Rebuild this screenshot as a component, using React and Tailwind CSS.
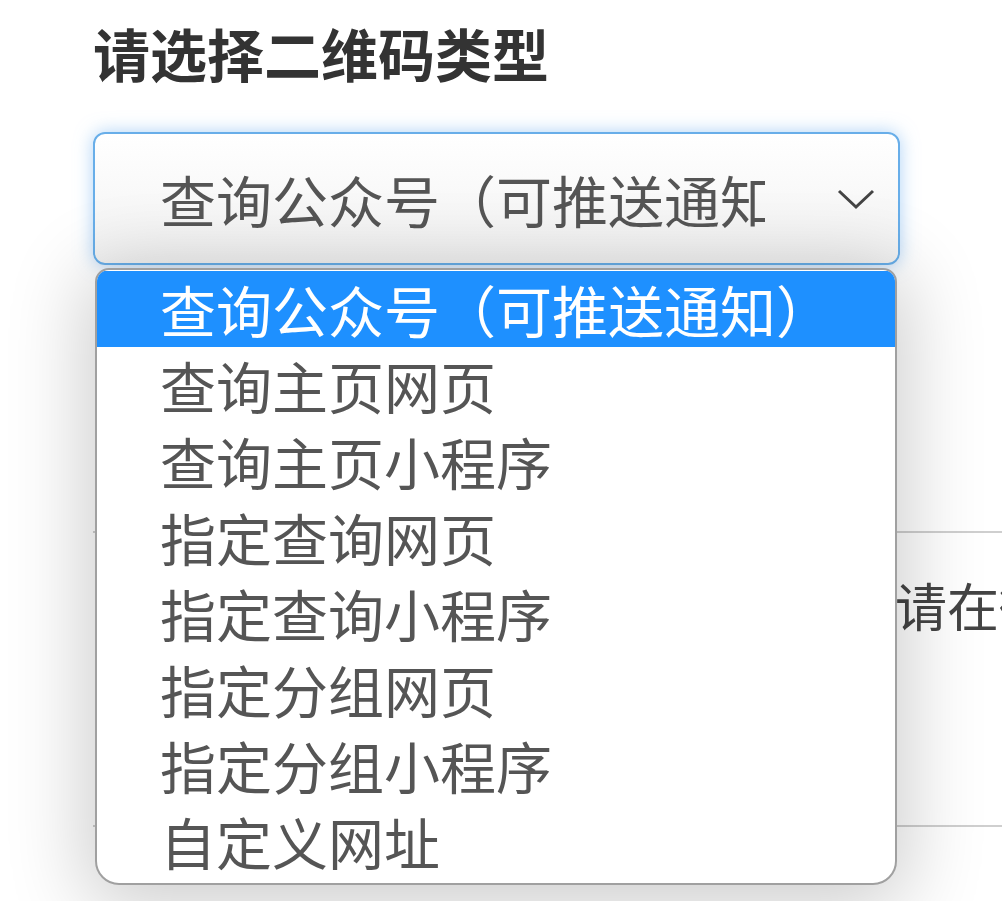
import { useState } from 'react';

const options = [
    '查询公众号（可推送通知）',
    '查询主页网页',
    '查询主页小程序',
    '指定查询网页',
    '指定查询小程序',
    '指定分组网页',
    '指定分组小程序',
    '自定义网址',
];

const cjk = "font-['Noto_Sans_CJK_SC','Noto_Sans',sans-serif]";

export default function App() {
    const [selected, setSelected] = useState(0);

    return (
        <div className={`relative h-[901px] w-full overflow-hidden bg-white ${cjk}`}>
            <div className="pl-[93px] pt-[14px]">
                <h1 className="h-[76px] text-[57px] font-bold leading-[76px] text-[#333] whitespace-nowrap">
                    请选择二维码类型
                </h1>

                {/* select box */}
                <div className="mt-[42px] flex h-[133px] w-[807px] items-center rounded-[12px] border-2 border-[#68aee9] bg-gradient-to-b from-white to-[#f2f2f2] pl-[65px] pr-[22px] shadow-[0_0_18px_rgba(110,175,240,0.55)]">
                    <div className="w-[605px] overflow-hidden whitespace-nowrap text-[56px] leading-[76px] text-[#555]">
                        {options[selected]}
                    </div>
                    <div className="ml-auto flex w-[40px] justify-center">
                        <svg width="38" height="22" viewBox="0 0 38 22">
                            <polyline points="2,3 19,19 36,3" fill="none" stroke="#444" strokeWidth="3" />
                        </svg>
                    </div>
                </div>

                {/* content behind the open list */}
                <div className="mt-[266px] grid grid-cols-[802px_1fr] border-y-2 border-[#cfcfcf]">
                    <div className="h-[292px]" />
                    <div className="pt-[38px] whitespace-nowrap text-[52px] leading-[68px] text-[#444]">请在微信公众号</div>
                </div>
            </div>

            {/* open dropdown list */}
            <ul className="absolute left-[95px] top-[268px] w-[802px] overflow-hidden rounded-t-[14px] rounded-b-[24px] border-2 border-[#a0a0a0] bg-white pt-[1px] pb-[4px] shadow-[0_12px_80px_10px_rgba(0,0,0,0.2)]">
                {options.map((opt, i) => (
                    <li
                        key={opt}
                        onClick={() => setSelected(i)}
                        className={`h-[76px] pl-[63px] text-[56px] leading-[76px] whitespace-nowrap ${i === selected
                            ? 'bg-[#1e90ff] text-white'
                            : 'text-[#555]'
                            }`}
                    >
                        {opt}
                    </li>
                ))}
            </ul>
        </div>
    );
}
